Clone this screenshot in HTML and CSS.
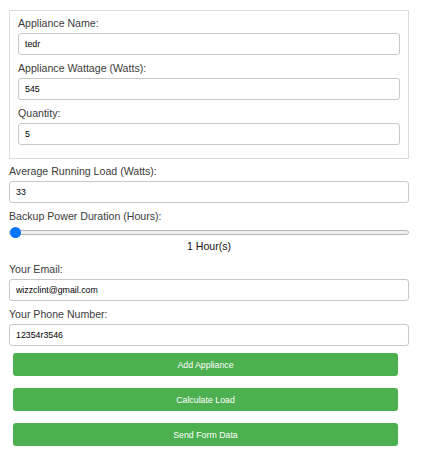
FILE: index.html
```html
<!DOCTYPE html>
<html>
<head>
<meta charset="utf-8">
<link rel="stylesheet" href="styles.css">
</head>
<body>
<form class="form">
  <div class="appliance-box">
    <label class="label">Appliance Name:</label>
    <input class="field" type="text" value="tedr">
    <label class="label">Appliance Wattage (Watts):</label>
    <input class="field" type="text" value="545">
    <label class="label">Quantity:</label>
    <input class="field" type="text" value="5">
  </div>
  <label class="label">Average Running Load (Watts):</label>
  <input class="field" type="text" value="33">
  <label class="label">Backup Power Duration (Hours):</label>
  <input class="range" type="range" min="1" max="24" value="1">
  <div class="range-value">1 Hour(s)</div>
  <label class="label">Your Email:</label>
  <input class="field" type="text" value="wizzclint@gmail.com">
  <label class="label">Your Phone Number:</label>
  <input class="field last" type="text" value="12354r3546">
  <div class="buttons">
    <button type="button" class="btn">Add Appliance</button>
    <button type="button" class="btn">Calculate Load</button>
    <button type="button" class="btn">Send Form Data</button>
  </div>
</form>
</body>
</html>
```
FILE: styles.css
```css
html, body {
  margin: 0;
  padding: 0;
  background: #fff;
}
body {
  font-family: "Liberation Sans", Arial, sans-serif;
}
.form {
  display: flex;
  flex-direction: column;
  width: 400px;
  padding: 10px 0 0 9px;
}
.appliance-box {
  display: flex;
  flex-direction: column;
  border: 1px solid #dcdcdc;
  padding: 5px 8px 7px 8px;
  margin-bottom: 5px;
}
.label {
  display: block;
  font-size: 10.6px;
  line-height: 14px;
  color: #3c3c3c;
  margin-bottom: 3px;
}
.field {
  box-sizing: border-box;
  height: 22px;
  width: 100%;
  margin: 0 0 6px 0;
  padding: 0 6px;
  border: 1px solid #c8c8c8;
  border-radius: 3px;
  font-family: "Liberation Sans", Arial, sans-serif;
  font-size: 8.8px;
  color: #000;
  background: #fff;
  outline: none;
}
.field.last {
  margin-bottom: 7px;
}
.range {
  -webkit-appearance: none;
  appearance: none;
  width: 400px;
  height: 13px;
  margin: 0;
  padding: 0;
  background: transparent;
}
.range::-webkit-slider-runnable-track {
  height: 5px;
  box-sizing: border-box;
  background: #efefef;
  border: 1px solid #b5b5b5;
  border-radius: 3px;
}
.range::-webkit-slider-thumb {
  -webkit-appearance: none;
  appearance: none;
  width: 11px;
  height: 11px;
  border-radius: 50%;
  background: #0075ff;
  border: none;
  margin-top: -4px;
}
.range-value {
  text-align: center;
  font-size: 10.6px;
  line-height: 14px;
  color: #111;
  margin-bottom: 9px;
}
.buttons {
  display: flex;
  flex-direction: column;
  gap: 12px;
  padding: 0 11px 0 4px;
}
.btn {
  height: 23px;
  width: 385px;
  border: none;
  border-radius: 3px;
  background: #4caf50;
  color: #fff;
  font-family: "Liberation Sans", Arial, sans-serif;
  font-size: 8.8px;
  padding: 0;
  cursor: pointer;
}
```
